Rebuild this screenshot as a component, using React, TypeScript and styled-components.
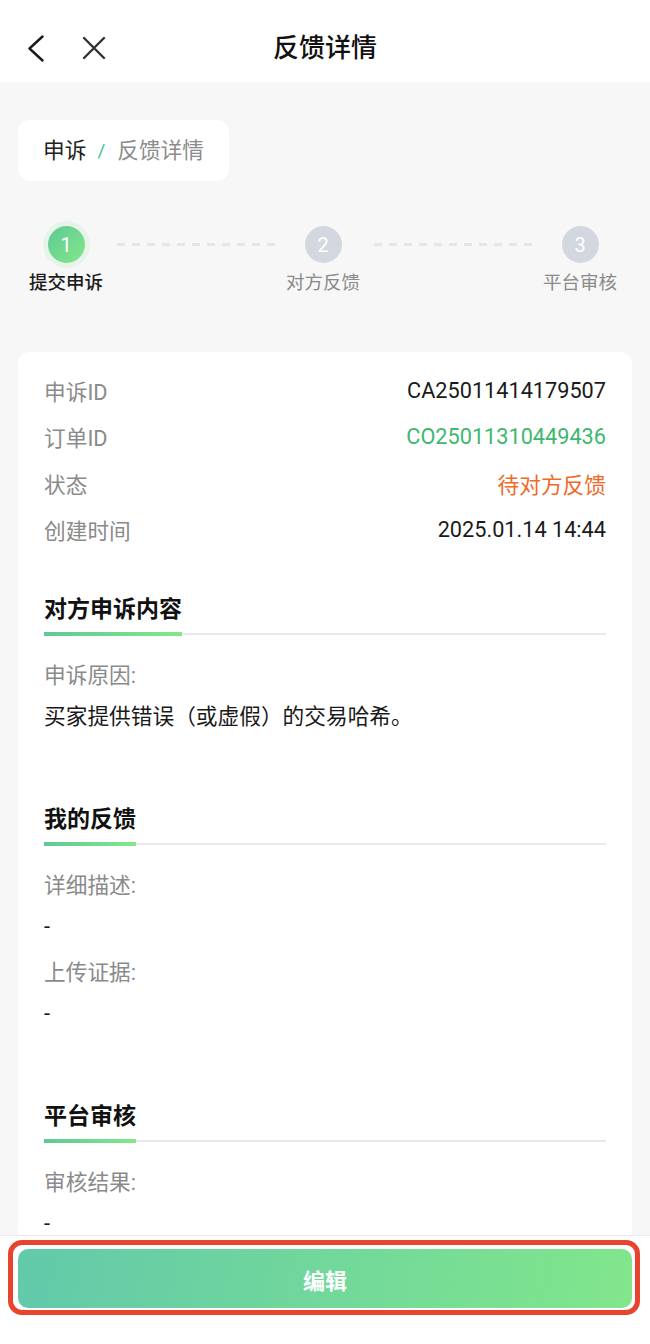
import { Fragment } from "react";
import styled, { createGlobalStyle } from "styled-components";

const GlobalStyle = createGlobalStyle`
  html, body {
    margin: 0;
    padding: 0;
    background: #f7f7f7;
    font-family: Roboto, "Noto Sans CJK SC", "Noto Sans", sans-serif;
    color: #1f1f1f;
  }
  * { box-sizing: border-box; }
`;

const Page = styled.div`
  width: 650px;
  min-height: 1344px;
  display: flex;
  flex-direction: column;
`;

const Header = styled.header`
  height: 82px;
  padding-top: 14px;
  background: #fff;
  display: grid;
  grid-template-columns: 1fr auto 1fr;
  align-items: center;
`;

const HeaderIcons = styled.div`
  display: flex;
  align-items: center;
  gap: 38px;
  padding-left: 27px;
`;

const HeaderTitle = styled.h1`
  margin: 0;
  font-size: 26px;
  font-weight: 500;
  line-height: 34px;
  color: #111;
`;

const Main = styled.main`
  padding: 38px 18px 0;
  display: flex;
  flex-direction: column;
  align-items: flex-start;
`;

const Crumbs = styled.nav`
  height: 61px;
  padding: 0 25px;
  background: #fff;
  border-radius: 12px;
  display: flex;
  align-items: center;
  font-size: 21.7px;
  line-height: 28px;
`;

const CrumbLink = styled.span`
  color: #222;
`;

const CrumbSep = styled.span`
  color: #3cc88c;
  font-size: 19px;
  margin: 0 12px 0 11px;
`;

const CrumbCurrent = styled.span`
  color: #8c8c8c;
`;

const Steps = styled.div`
  width: 100%;
  margin-top: 45px;
  padding-right: 4px;
  display: grid;
  grid-template-columns: 96px 1fr 96px 1fr 96px;
`;

const Step = styled.div`
  display: flex;
  flex-direction: column;
  align-items: center;
`;

const StepDot = styled.div<{ $active?: boolean }>`
  width: 37px;
  height: 37px;
  border-radius: 50%;
  display: flex;
  align-items: center;
  justify-content: center;
  color: #fff;
  font-size: 20px;
  background: ${(p) => (p.$active ? "linear-gradient(135deg, #5ec996, #84e78a)" : "#d3d8e0")};
  box-shadow: ${(p) => (p.$active ? "0 0 0 5px rgba(126, 226, 140, 0.13)" : "none")};
`;

const StepLabel = styled.div<{ $active?: boolean }>`
  margin-top: 8px;
  font-size: 18.5px;
  line-height: 24px;
  white-space: nowrap;
  color: ${(p) => (p.$active ? "#1c1c1c" : "#8a8a8a")};
  font-weight: ${(p) => (p.$active ? 500 : 400)};
`;

const Connector = styled.div`
  align-self: start;
  margin: 17px 0 0 3px;
  height: 3px;
  background: repeating-linear-gradient(90deg, #e1e5ed 0 8px, transparent 8px 15px);
`;

const Card = styled.section`
  width: 100%;
  margin-top: 57px;
  padding: 15px 26px 113px;
  background: #fff;
  border-radius: 12px 12px 0 0;
`;

const InfoRow = styled.div`
  height: 46.5px;
  display: flex;
  align-items: center;
  justify-content: space-between;
  font-size: 21.7px;
`;

const InfoKey = styled.span`
  color: #8a8a8a;
`;

const InfoValue = styled.span<{ $tone?: "green" | "orange" }>`
  color: ${(p) => (p.$tone === "green" ? "#3db86c" : p.$tone === "orange" ? "#ee6a28" : "#1a1a1a")};
`;

const Section = styled.div<{ $gap: number }>`
  margin-top: ${(p) => p.$gap}px;
`;

const SectionHead = styled.div`
  border-bottom: 2px solid #e8e9ee;
`;

const SectionTitle = styled.h2`
  display: inline-block;
  margin: 0 0 -3px;
  padding-bottom: 11px;
  font-size: 23px;
  line-height: 30px;
  font-weight: 700;
  color: #111;
  background: linear-gradient(90deg, #5ec996, #84e78a) left bottom / 100% 4px no-repeat;
`;

const FieldLabel = styled.div<{ $first?: boolean }>`
  margin-top: ${(p) => (p.$first ? 29 : 22)}px;
  font-size: 21.7px;
  line-height: 24px;
  color: #8a8a8a;
`;

const FieldValue = styled.div`
  margin-top: 17px;
  font-size: 21.7px;
  line-height: 24px;
  color: #1a1a1a;
`;

const Footer = styled.footer`
  position: fixed;
  left: 0;
  right: 0;
  bottom: 0;
  background: #fff;
  border-top: 1px solid #ebebf0;
  padding: 4px 0 29px;
`;

const Highlight = styled.div`
  margin: 0 10px 0 8px;
  padding: 4px 3px 2px 5px;
  border: 5px solid #e8432c;
  border-radius: 14px;
`;

const EditButton = styled.button`
  width: 100%;
  height: 59px;
  border: none;
  border-radius: 10px;
  background: linear-gradient(100deg, #62c9ab, #81e68b);
  color: #fff;
  font-family: inherit;
  font-size: 22px;
  font-weight: 700;
  cursor: pointer;
`;

const BackIcon = () => (
  <svg width="17" height="27" viewBox="0 0 17 27" fill="none">
    <path d="M15.5 1.5L2.5 13.5L15.5 25.5" stroke="#1a1a1a" strokeWidth="2.4" strokeLinecap="round" strokeLinejoin="round" />
  </svg>
);

const CloseIcon = () => (
  <svg width="24" height="24" viewBox="0 0 24 24" fill="none">
    <path d="M2 2L22 22M22 2L2 22" stroke="#333" strokeWidth="2.4" strokeLinecap="round" />
  </svg>
);

const info = [
  { key: "申诉ID", value: "CA25011414179507" },
  { key: "订单ID", value: "CO25011310449436", tone: "green" as const },
  { key: "状态", value: "待对方反馈", tone: "orange" as const },
  { key: "创建时间", value: "2025.01.14 14:44" },
];

const steps = ["提交申诉", "对方反馈", "平台审核"];

export default function App() {
  return (
    <Page>
      <GlobalStyle />
      <Header>
        <HeaderIcons>
          <BackIcon />
          <CloseIcon />
        </HeaderIcons>
        <HeaderTitle>反馈详情</HeaderTitle>
        <div />
      </Header>

      <Main>
        <Crumbs>
          <CrumbLink>申诉</CrumbLink>
          <CrumbSep>/</CrumbSep>
          <CrumbCurrent>反馈详情</CrumbCurrent>
        </Crumbs>

        <Steps>
          {steps.map((label, i) => (
            <Fragment key={label}>
              {i > 0 && <Connector />}
              <Step>
                <StepDot $active={i === 0}>{i + 1}</StepDot>
                <StepLabel $active={i === 0}>{label}</StepLabel>
              </Step>
            </Fragment>
          ))}
        </Steps>

        <Card>
          {info.map((row) => (
            <InfoRow key={row.key}>
              <InfoKey>{row.key}</InfoKey>
              <InfoValue $tone={row.tone}>{row.value}</InfoValue>
            </InfoRow>
          ))}

          <Section $gap={42}>
            <SectionHead>
              <SectionTitle>对方申诉内容</SectionTitle>
            </SectionHead>
            <FieldLabel $first>申诉原因:</FieldLabel>
            <FieldValue>买家提供错误（或虚假）的交易哈希。</FieldValue>
          </Section>

          <Section $gap={76}>
            <SectionHead>
              <SectionTitle>我的反馈</SectionTitle>
            </SectionHead>
            <FieldLabel $first>详细描述:</FieldLabel>
            <FieldValue>-</FieldValue>
            <FieldLabel>上传证据:</FieldLabel>
            <FieldValue>-</FieldValue>
          </Section>

          <Section $gap={76}>
            <SectionHead>
              <SectionTitle>平台审核</SectionTitle>
            </SectionHead>
            <FieldLabel $first>审核结果:</FieldLabel>
            <FieldValue>-</FieldValue>
          </Section>
        </Card>
      </Main>

      <Footer>
        <Highlight>
          <EditButton>编辑</EditButton>
        </Highlight>
      </Footer>
    </Page>
  );
}
